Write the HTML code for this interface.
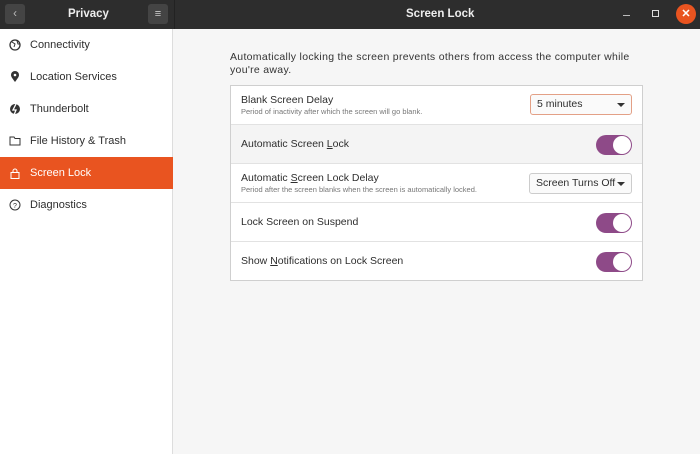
<!DOCTYPE html><html><head><style>
*{margin:0;padding:0;box-sizing:border-box}
body{width:700px;height:454px;overflow:hidden;font-family:"Liberation Sans",sans-serif;background:#f6f6f6;position:relative;color:#2e2e2e}
.hdr{position:absolute;left:0;top:0;width:700px;height:29px;background:#2d2d2d;color:#eee;font-weight:bold;font-size:11.5px}
.side{position:absolute;left:0;top:29px;width:173px;height:425px;background:#fff;border-right:1px solid #ddd}
.item{position:absolute;left:0;width:173px;height:32px;font-size:11px;line-height:32px;padding-left:30px}
.item svg{position:absolute;left:9px;top:10px}
.sel{background:#e95420;color:#fff}
.panel{position:absolute;left:230px;top:85px;width:413px;height:196px;background:#fff;border:1px solid #cfcfcf}
.row{position:absolute;left:0;width:411px;height:39px;border-bottom:1px solid #e2e2e2;font-size:10.5px}
.t{position:absolute;left:10px}
.s{position:absolute;left:10px;top:21px;font-size:7.5px;color:#777}
.tg{position:absolute;left:365px;top:10px;width:36px;height:20px;border-radius:10px;background:#8e4a88}
.tg:after{content:"";position:absolute;right:1px;top:1px;width:18px;height:18px;border-radius:50%;background:#fff}
.dd{position:absolute;height:21px;border:1px solid #ccc;border-radius:3px;background:#fafafa;font-size:10.5px;line-height:19px;padding-left:6px}
.dd:after{content:"";position:absolute;right:6px;top:8px;border:4px solid transparent;border-top:4px solid #333}
</style></head><body>
<div class="hdr">
<div style="position:absolute;left:5px;top:4px;width:20px;height:20px;background:#444;border-radius:3px;color:#bbb;font-weight:normal;text-align:center;line-height:20px">&#8249;</div>
<div style="position:absolute;left:68px;top:8px">Privacy</div>
<div style="position:absolute;left:148px;top:4px;width:20px;height:20px;background:#444;border-radius:3px;color:#ccc;font-weight:normal;text-align:center;line-height:20px;font-size:11px">&#8801;</div>
<div style="position:absolute;left:174px;top:0;width:1px;height:29px;background:#222"></div>
<div style="position:absolute;left:406px;top:8px">Screen Lock</div>
<div style="position:absolute;left:623px;top:15px;width:7px;height:1px;background:#bbb"></div>
<div style="position:absolute;left:652px;top:10px;width:7px;height:7px;border:1px solid #ddd"></div>
<div style="position:absolute;left:676px;top:4px;width:20px;height:20px;border-radius:50%;background:#e95420;color:#fff;text-align:center;line-height:20px;font-size:11px">&#x2715;</div>
</div>
<div class="side">
<div class="item" style="top:0"><svg width="12" height="12"><circle cx="6" cy="6" r="5" fill="none" stroke="#333" stroke-width="1.3"/><path d="M3 3l3 2-1 3M8 2l1 3 2 0" stroke="#333" fill="none"/></svg>Connectivity</div>
<div class="item" style="top:32px"><svg width="12" height="12"><path d="M6 11C3 7 2 5.5 2 4a4 4 0 018 0c0 1.5-1 3-4 7z" fill="#333"/><circle cx="6" cy="4" r="1.3" fill="#fff"/></svg>Location Services</div>
<div class="item" style="top:64px"><svg width="12" height="12"><circle cx="6" cy="6" r="5" fill="#333"/><path d="M7 1L4 7h3l-2 5" stroke="#fff" stroke-width="1.3" fill="none"/></svg>Thunderbolt</div>
<div class="item" style="top:96px"><svg width="12" height="12"><path d="M1 2h4l1 1.5h5V10H1z" fill="none" stroke="#333"/></svg>File History &amp; Trash</div>
<div class="item sel" style="top:128px"><svg width="12" height="12"><rect x="2" y="5.5" width="8" height="6" fill="none" stroke="#fff"/><path d="M4 5.5V4a2 2 0 014 0v1.5" fill="none" stroke="#fff"/></svg>Screen Lock</div>
<div class="item" style="top:160px"><svg width="12" height="12"><circle cx="6" cy="6" r="5" fill="none" stroke="#333"/><text x="6" y="9" font-size="7" text-anchor="middle" fill="#333" font-family="Liberation Sans">?</text></svg>Diagnostics</div>
</div>
<div style="position:absolute;left:230px;top:51px;font-size:10.5px;letter-spacing:0.3px;line-height:13px;width:460px;white-space:nowrap;color:#333">Automatically locking the screen prevents others from access the computer while<br>you're away.</div>
<div class="panel">
<div class="row" style="top:0"><div class="t" style="top:8px">Blank Screen Delay</div><div class="s">Period of inactivity after which the screen will go blank.</div><div class="dd" style="left:299px;top:8px;width:102px;border-color:#e3a086">5 minutes</div></div>
<div class="row" style="top:39px;background:#f4f4f4"><div class="t" style="top:13px">Automatic Screen <u>L</u>ock</div><div class="tg"></div></div>
<div class="row" style="top:78px"><div class="t" style="top:8px">Automatic <u>S</u>creen Lock Delay</div><div class="s">Period after the screen blanks when the screen is automatically locked.</div><div class="dd" style="left:298px;top:9px;width:103px">Screen Turns Off</div></div>
<div class="row" style="top:117px"><div class="t" style="top:13px">Lock Screen on Suspend</div><div class="tg"></div></div>
<div class="row" style="top:156px;border:none"><div class="t" style="top:13px">Show <u>N</u>otifications on Lock Screen</div><div class="tg"></div></div>
</div>
</body></html>
